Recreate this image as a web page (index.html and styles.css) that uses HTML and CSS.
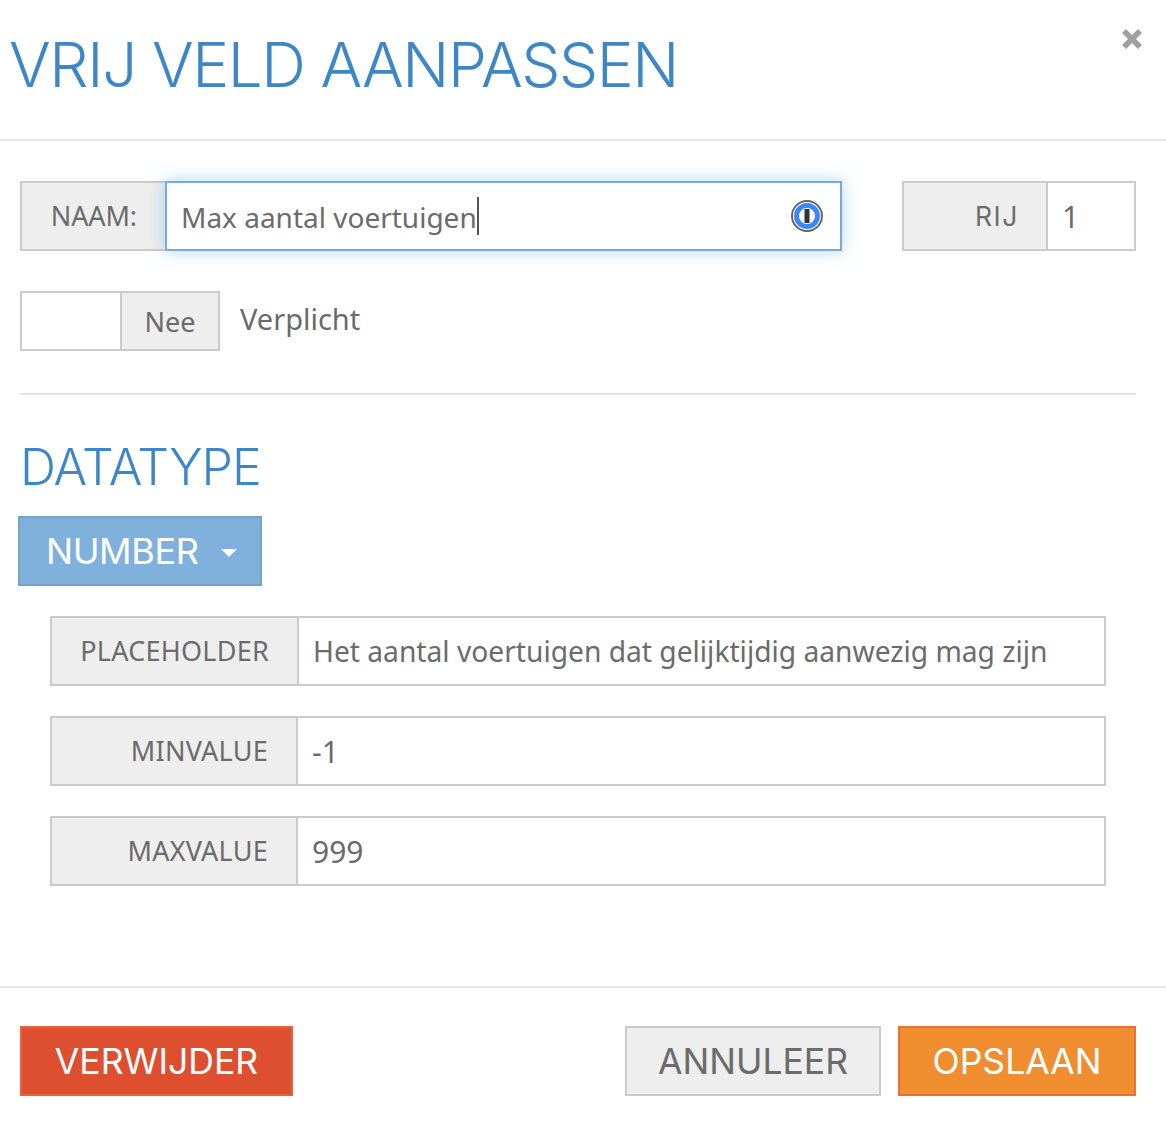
FILE: index.html
```html
<!DOCTYPE html>
<html lang="nl">
<head>
<meta charset="utf-8">
<title>Vrij veld aanpassen</title>
<link rel="stylesheet" href="styles.css">
</head>
<body>
<main class="modal">
  <header class="modal-head">
    <h1 class="title">VRIJ VELD AANPASSEN</h1>
    <button class="close" aria-label="Sluiten">
      <svg viewBox="0 0 22 22" width="22" height="22"><path d="M5 1 L11 7 L17 1 L21 5 L15 11 L21 17 L17 21 L11 15 L5 21 L1 17 L7 11 L1 5 Z" fill="#a0a0a0"/></svg>
    </button>
  </header>
  <section class="modal-body">
    <div class="row-top">
      <div class="group group-name">
        <span class="addon addon-naam">NAAM:</span>
        <div class="field field-focus">
          <span class="value value-focus">Max aantal voertuigen</span><span class="caret"></span>
          <svg class="pw-icon" viewBox="0 0 32 32" width="32" height="32">
            <circle cx="16" cy="16" r="15" fill="#fff" stroke="#666" stroke-width="2"/>
            <circle cx="16" cy="16" r="10.5" fill="#fff" stroke="#3d87f5" stroke-width="5"/>
            <rect x="13.5" y="9" width="5" height="14" fill="#333"/>
          </svg>
        </div>
      </div>
      <div class="group group-rij">
        <span class="addon addon-rij">RIJ</span>
        <div class="field"><span class="value value-num">1</span></div>
      </div>
    </div>
    <div class="row-toggle">
      <div class="toggle">
        <span class="toggle-blank"></span>
        <span class="toggle-label">Nee</span>
      </div>
      <span class="toggle-text">Verplicht</span>
    </div>
    <hr class="divider">
    <h2 class="subtitle">DATATYPE</h2>
    <button class="dropdown">NUMBER<span class="arrow"></span></button>
    <div class="options">
      <div class="group">
        <span class="addon addon-ph">PLACEHOLDER</span>
        <div class="field"><span class="value">Het aantal voertuigen dat gelijktijdig aanwezig mag zijn</span></div>
      </div>
      <div class="group">
        <span class="addon addon-val">MINVALUE</span>
        <div class="field"><span class="value value-num">-1</span></div>
      </div>
      <div class="group">
        <span class="addon addon-val">MAXVALUE</span>
        <div class="field"><span class="value value-num">999</span></div>
      </div>
    </div>
  </section>
  <footer class="modal-foot">
    <button class="btn btn-danger">VERWIJDER</button>
    <span class="spacer"></span>
    <button class="btn btn-default">ANNULEER</button>
    <button class="btn btn-primary">OPSLAAN</button>
  </footer>
</main>
</body>
</html>
```

FILE: styles.css
```css
* { box-sizing: border-box; }
html, body { margin: 0; padding: 0; background: #fff; }
body {
  width: 1166px;
  height: 1124px;
  overflow: hidden;
  font-family: "Noto Sans", "Open Sans", sans-serif;
  color: #6b6b6b;
}
.modal { display: flex; flex-direction: column; height: 100%; }
.modal-head {
  height: 141px;
  border-bottom: 2px solid #e5e5e5;
  position: relative;
  padding: 23px 0 0 9px;
}
.title {
  margin: 0;
  font: 300 62px/84px "Inter", sans-serif;
  letter-spacing: -1.4px;
  color: #3e87c7;
}
.close {
  position: absolute;
  top: 28px;
  right: 23px;
  width: 22px;
  height: 22px;
  padding: 0;
  border: 0;
  background: none;
  line-height: 0;
}
.modal-body { padding: 40px 30px 0 20px; height: 845px; }
.row-top { display: flex; gap: 60px; }
.group {
  display: flex;
  height: 70px;
  border: 2px solid #cbcbcb;
}
.group-name { width: 822px; }
.group-rij { width: 234px; }
.addon {
  display: flex;
  align-items: center;
  justify-content: flex-end;
  flex: none;
  padding: 0 28px 1px 0;
  background: #eeeeee;
  border-right: 2px solid #cbcbcb;
  font-size: 27px;
  letter-spacing: 0.25px;
  color: #6b6b6b;
}
.addon-naam { width: 143px; border-right: 0; padding-right: 28px; letter-spacing: -0.1px; }
.addon-rij { width: 144px; padding-right: 27px; font: 400 26.5px "Inter", sans-serif; letter-spacing: 1.6px; }
.addon-ph { width: 247px; }
.addon-val { width: 246px; }
.field {
  flex: 1;
  display: flex;
  align-items: center;
  position: relative;
  padding: 0 14px;
  font-size: 28.2px;
  background: #fff;
}
.value-focus { font-size: 28px; padding-top: 1px; }
.value-num { font-size: 30px; }
.field-focus {
  margin: -2px -2px -2px 0;
  border: 2px solid #74a9e6;
  box-shadow: 0 0 16px rgba(90, 155, 230, 0.45);
}
.caret { width: 2px; height: 38px; background: #555; }
.pw-icon { position: absolute; right: 17px; top: 17px; }
.row-toggle {
  display: flex;
  align-items: flex-start;
  gap: 20px;
  margin-top: 40px;
}
.toggle {
  display: flex;
  width: 200px;
  height: 60px;
  border: 2px solid #cbcbcb;
}
.toggle-blank { width: 100px; border-right: 2px solid #cbcbcb; background: #fff; }
.toggle-label {
  flex: 1;
  display: flex;
  align-items: center;
  justify-content: center;
  background: #eeeeee;
  font-size: 27px;
}
.toggle-text { font-size: 29px; line-height: 56px; }
.divider {
  height: 2px;
  width: 1116px;
  margin: 42px 0 0;
  border: 0;
  background: #e5e5e5;
}
.subtitle {
  margin: 38px 0 0 0;
  font: 300 50px/68px "Inter", sans-serif;
  letter-spacing: -0.9px;
  color: #3e87c7;
}
.dropdown {
  display: flex;
  align-items: center;
  width: 244px;
  height: 70px;
  margin: 15px 0 0 -2px;
  padding: 0 0 0 26px;
  background: #80b1dc;
  border: 2px solid #74a5c5;
  color: #fff;
  font: 400 36px "Inter", sans-serif;
  letter-spacing: -0.4px;
}
.arrow {
  margin-left: 23px;
  margin-top: 4px;
  border-top: 8px solid #fff;
  border-left: 8px solid transparent;
  border-right: 8px solid transparent;
}
.options {
  display: flex;
  flex-direction: column;
  gap: 30px;
  margin: 30px 0 0 30px;
  width: 1056px;
}
.modal-foot {
  display: flex;
  align-items: flex-start;
  gap: 17px;
  padding: 38px 30px 0 20px;
  border-top: 2px solid #e5e5e5;
}
.spacer { flex: 1; }
.btn {
  height: 70px;
  padding: 0;
  font: 400 35.5px "Inter", sans-serif;
  border: 2px solid;
}
.btn-danger { width: 273px; background: #de4f2f; border-color: #e8613c; color: #fff; }
.btn-default { width: 256px; background: #eeeeee; border-color: #cbcbcb; color: #6b6b6b; }
.btn-primary { width: 238px; background: #f08e2f; border-color: #ea7038; color: #fff; }
```
